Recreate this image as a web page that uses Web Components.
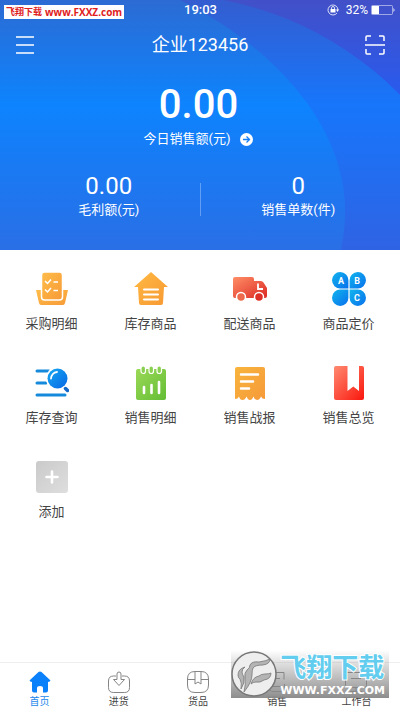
<!DOCTYPE html>
<html lang="zh-CN">
<head>
<meta charset="UTF-8">
<meta name="viewport" content="width=device-width, initial-scale=1.0">
<title>企业123456</title>
<style>
    body {
        margin: 0;
        background: #fff;
        color: #444;
        font-family: Roboto, "Noto Sans CJK SC", sans-serif;
        font-size: 13px;
        line-height: 20px;
    }
</style>
</head>
<body>
<app-shell>
    <status-bar slot="header" time="19:03" battery="32%"></status-bar>
    <title-bar slot="header">企业123456</title-bar>
    <sales-summary slot="header">
        <stat-figure size="large" value="0.00" href="#today">今日销售额(元)</stat-figure>
        <stat-figure slot="detail" value="0.00">毛利额(元)</stat-figure>
        <stat-figure slot="detail" value="0">销售单数(件)</stat-figure>
    </sales-summary>

    <menu-grid>
        <menu-tile icon="purchase">采购明细</menu-tile>
        <menu-tile icon="stock">库存商品</menu-tile>
        <menu-tile icon="truck">配送商品</menu-tile>
        <menu-tile icon="pricing">商品定价</menu-tile>
        <menu-tile icon="search">库存查询</menu-tile>
        <menu-tile icon="chart">销售明细</menu-tile>
        <menu-tile icon="report">销售战报</menu-tile>
        <menu-tile icon="book">销售总览</menu-tile>
        <menu-tile icon="add">添加</menu-tile>
    </menu-grid>

    <tab-bar slot="footer">
        <tab-item icon="home" href="#home" active>首页</tab-item>
        <tab-item icon="inbox" href="#inbox">进货</tab-item>
        <tab-item icon="goods" href="#goods">货品</tab-item>
        <tab-item icon="sales" href="#sales">销售</tab-item>
        <tab-item icon="desk" href="#desk">工作台</tab-item>
    </tab-bar>

    <site-label slot="overlay">飞翔下载</site-label>
    <site-stamp slot="overlay">飞翔下载</site-stamp>
</app-shell>

<script>
    const gradient = (id, from, to) => `
        <linearGradient id="${id}" x1="0" y1="0" x2="1" y2="1">
            <stop offset="0" stop-color="${from}"/><stop offset="1" stop-color="${to}"/>
        </linearGradient>`

    // viewBox 34 for menu icons, 22 for tab icons
    const ICONS = {
        purchase: [34, `<defs>${gradient("g", "#ffbd4a", "#f79a36")}</defs>
            <path d="M1 18h32l-3 13q-.5 2-2 2H6q-1.500 0-2-2z" fill="url(#g)"/>
            <rect x="6.500" y="0" width="21" height="28" rx="3" fill="url(#g)" stroke="#fff" stroke-width="1.500"/>
            <path d="M10 9l2.500 2.500L16 7.500M10 17.500l2.500 2.500L16 16M18.500 10H23M18.500 18.500H23" fill="none" stroke="#fff" stroke-width="1.500"/>`],
        stock: [34, `<defs>${gradient("g", "#ffba43", "#f79832")}</defs>
            <path d="M17 0l17 15h-4l-1 16q0 2-2 2H7q-2 0-2-2L4 15H0z" fill="url(#g)"/>
            <path d="M10 17.500h14M10 22.500h14M10 27.500h14" stroke="#fff" stroke-width="2" stroke-linecap="round"/>`],
        truck: [34, `<defs>${gradient("g", "#ff8e66", "#dc2b25")}</defs>
            <path d="M2 5h17q2 0 2 2v2h7q1.500 0 2.500 1.500L34 16v8q0 2-2 2H2q-2 0-2-2V7q0-2 2-2z" fill="url(#g)"/>
            <path d="M25 11.500V17h5" fill="none" stroke="#fff" stroke-width="1.800"/>
            <g fill="#ee6a4c" stroke="#fff" stroke-width="1.500"><circle cx="8" cy="25" r="4.500"/><circle cx="26" cy="25" r="4.500" fill="#dd3029"/></g>`],
        pricing: [34, `<defs>${gradient("g", "#12b5ee", "#0870ec")}</defs>
            <g fill="url(#g)"><path d="M16.400 16.400H8.500a8.200 8.200 0 1 1 7.900-8z"/><path d="M17.600 16.400v-8a8.200 8.200 0 1 1 7.900 8z"/>
            <path d="M16.400 17.600v8a8.200 8.200 0 1 1-7.900-8z"/><path d="M17.600 17.600h7.900a8.200 8.200 0 1 1-7.900 8z"/></g>
            <g fill="#fff" font-family="Roboto, sans-serif" font-size="9" font-weight="700" text-anchor="middle">
            <text x="9" y="12">A</text><text x="25" y="12">B</text><text x="25" y="29">C</text></g>`],
        search: [34, `<defs>${gradient("g", "#16a8f1", "#0868e5")}</defs>
            <path d="M2 5h12M2 17h9M2 29h28" stroke="#1589dc" stroke-width="3" stroke-linecap="round"/>
            <circle cx="22.500" cy="12.500" r="11.500" fill="#fff"/><circle cx="22.500" cy="12.500" r="10" fill="url(#g)"/>
            <path d="M16 12.500a7 7 0 0 1 6-6.500" fill="none" stroke="#fff" stroke-width="1.800" stroke-linecap="round"/>
            <path d="M30.500 22.500l2 2" stroke="#1368c8" stroke-width="3.500" stroke-linecap="round"/>`],
        chart: [34, `<defs>${gradient("g", "#9bd957", "#64bd35")}</defs>
            <path d="M4 3h26q2 0 2 2v27q0 2-2 2H4q-2 0-2-2V5q0-2 2-2z" fill="url(#g)"/>
            <g fill="#8ad050" stroke="#fff" stroke-width="1.200"><rect x="7" y="0" width="4.500" height="7.500" rx="2.200"/><rect x="15" y="0" width="4.500" height="7.500" rx="2.200"/><rect x="23" y="0" width="4.500" height="7.500" rx="2.200"/></g>
            <path d="M10 21v6M17.500 19v8M25 16v11" stroke="#fff" stroke-width="2.600" stroke-linecap="round"/>`],
        report: [34, `<defs>${gradient("g", "#f8b43c", "#f69a3a")}</defs>
            <path d="M4 1h26q2 0 2 2v30q-3 0-4-2.500-1.500 3.500-4 3.500t-3.500-3.500Q19 34 17 34t-3.500-3.500Q12 34 9.500 34T6 30.500Q5 33 2 33V3q0-2 2-2z" fill="url(#g)"/>
            <path d="M8 8.500h17M8 15.500h12M8 22.500h8" stroke="#fff" stroke-width="2.500" stroke-linecap="round"/>`],
        book: [34, `<defs>${gradient("g", "#ff8a70", "#fa160d")}</defs>
            <rect x="2" y="0" width="30" height="34" rx="2" fill="url(#g)"/>
            <path d="M15.500 0H27v25l-5.700-4.500-5.800 4.500z" fill="#fff"/>`],
        add: [34, `<defs>${gradient("g", "#cacaca", "#dedede")}</defs>
            <rect x="1" y="1" width="32" height="32" rx="3" fill="url(#g)"/>
            <path d="M17 11.500v11M11.500 17h11" stroke="#fff" stroke-width="2.600" stroke-linecap="round"/>`],
        home: [22, `<path d="M11 .5q.8 0 1.500.6l8.500 8q1 1-.3 1.400L19 11v8.500q0 2-2 2h-3V17q0-2-3-2t-3 2v4.500H5q-2 0-2-2V11l-1.700-.5Q0 10.100 1 9.100l8.500-8Q10.200.5 11 .5z" fill="#0b80fb"/>`],
        inbox: [22, `<g fill="none" stroke="#858585" stroke-linejoin="round">
            <path d="M8 5H5.500q-5 0-5 5v6.500q0 5 5 5h11q5 0 5-5V10q0-5-5-5H14"/>
            <path d="M9 8.500V3q0-2 2-2t2 2v5.500h3.500L11 14.500l-5.500-6z"/></g>`],
        goods: [22, `<g fill="none" stroke="#858585">
            <path d="M8 .5h6q7.500 0 7.500 7.500v6q0 7.500-7.500 7.500H8Q.5 21.500.5 14V8Q.5.500 8 .5z"/>
            <path d="M1 8.500h7M14 8.500h7M8 1v12l3-2 3 2V1"/></g>`],
        sales: [22, `<g fill="none" stroke="#858585">
            <path d="M3 1.500h15v7M18.500 13v7.500h-13l-4-4v-13"/><path d="M6 15.500h9M6 7.500h8"/></g>`],
        desk: [22, `<g fill="none" stroke="#858585">
            <rect x=".5" y="1.500" width="21" height="15" rx="2"/><path d="M5 20.500h12M11 17v3M6 7.500h10"/></g>`],
        menu: [20, `<path d="M1 2h18M1 10h18M1 18h18" stroke="#fff" stroke-width="1.500"/>`],
        scan: [20, `<path d="M1 6V2q0-1 1-1h4M14 1h4q1 0 1 1v4M19 14v4q0 1-1 1h-4M6 19H2q-1 0-1-1v-4M0 10h20" fill="none" stroke="#fff" stroke-width="1.500"/>`],
        arrow: [13, `<circle cx="6.500" cy="6.500" r="6.500" fill="#fff"/><path d="M3 6.500h6M6.500 3.500l3 3-3 3" fill="none" stroke="#167ff5" stroke-width="1.300"/>`],
        lock: [12, `<g fill="none" stroke="#fff" stroke-opacity=".8"><path d="M10 9a5 5 0 1 1 1-3"/><path d="M4.500 5.500V4a1.500 1.500 0 0 1 3 0v1.500"/></g>
            <rect x="3.500" y="5" width="5" height="3.500" fill="#fff"/><path d="M9 5.500h3L10.500 8z" fill="#fff"/>`],
    }

    class AppIcon extends HTMLElement {
        connectedCallback() {
            const [size, art] = ICONS[this.getAttribute("name")]
            this.attachShadow({ mode: "open" })
            this.shadowRoot.innerHTML = `
      <style>
        :host { display: block; flex: none; }
        svg { display: block; }
      </style>
      <svg width="${size}" height="${size}" viewBox="0 0 ${size} ${size}" aria-hidden="true">${art}</svg>
    `
        }
    }

    class AppShell extends HTMLElement {
        connectedCallback() {
            this.attachShadow({ mode: "open" })
            this.shadowRoot.innerHTML = `
      <style>
        :host {
          display: flex;
          flex-direction: column;
          min-height: 100vh;
          position: relative;
        }
        header {
          position: relative;
          overflow: hidden;
          color: #fff;
          padding-bottom: 30px;
          background: linear-gradient(#4250c8, #2a5aec 36%, #3161e6);
        }
        .rings {
          position: absolute;
          inset: 0;
          width: 100%;
          height: 100%;
        }
        .content { position: relative; }
        main { flex: 1; }
      </style>
      <header>
        <svg class="rings" viewBox="0 0 400 250" preserveAspectRatio="xMaxYMid slice" aria-hidden="true">
          <defs>
            <linearGradient id="outer" gradientUnits="userSpaceOnUse" x1="0" y1="0" x2="0" y2="250">
              <stop offset="0" stop-color="#345dd0"/><stop offset=".42" stop-color="#1776fb"/><stop offset="1" stop-color="#2f63e4"/>
            </linearGradient>
            <linearGradient id="inner" gradientUnits="userSpaceOnUse" x1="0" y1="0" x2="0" y2="250">
              <stop offset="0" stop-color="#2c6bd3"/><stop offset=".42" stop-color="#0d84fe"/><stop offset=".6" stop-color="#167cf6"/><stop offset="1" stop-color="#2a6fe6"/>
            </linearGradient>
          </defs>
          <circle cx="160" cy="330" r="336" fill="url(#outer)"/>
          <path d="M-600 0H180C280 50 345 130 345 210Q345 232 341 250H-600z" fill="url(#inner)"/>
        </svg>
        <div class="content"><slot name="header"></slot></div>
      </header>
      <main><slot></slot></main>
      <slot name="footer"></slot>
      <slot name="overlay"></slot>
    `
        }
    }

    class StatusBar extends HTMLElement {
        connectedCallback() {
            this.attachShadow({ mode: "open" })
            this.shadowRoot.innerHTML = `
      <style>
        :host {
          display: grid;
          grid-template-columns: 1fr auto 1fr;
          align-items: center;
          padding: 0 5px 0 6px;
          font-size: 12px;
        }
        time { grid-column: 2; font-size: 13px; font-weight: 500; }
        .power {
          display: flex;
          justify-content: flex-end;
          align-items: center;
          gap: 3px;
        }
        app-icon { margin-right: 4px; }
      </style>
      <time>${this.getAttribute("time")}</time>
      <div class="power">
        <app-icon name="lock"></app-icon>
        <span>${this.getAttribute("battery")}</span>
        <svg width="24" height="10" viewBox="0 0 24 10" aria-hidden="true">
          <rect x=".5" y=".5" width="21" height="9" rx="1" fill="none" stroke="#fff" stroke-opacity=".5"/>
          <rect x="1" y="1" width="7" height="8" fill="#fff"/>
          <path d="M22.500 3q2 2 0 4z" fill="#fff"/>
        </svg>
      </div>
    `
        }
    }

    class TitleBar extends HTMLElement {
        connectedCallback() {
            this.attachShadow({ mode: "open" })
            this.shadowRoot.innerHTML = `
      <style>
        :host {
          display: flex;
          align-items: center;
          justify-content: space-between;
          height: 50px;
          padding: 0 15px;
        }
        h1 {
          margin: 0;
          font-size: 18px;
          font-weight: 400;
        }
        button {
          border: 0;
          padding: 0;
          background: none;
          cursor: pointer;
        }
      </style>
      <button type="button" aria-label="菜单"><app-icon name="menu"></app-icon></button>
      <h1><slot></slot></h1>
      <button type="button" aria-label="扫一扫"><app-icon name="scan"></app-icon></button>
    `
        }
    }

    class SalesSummary extends HTMLElement {
        connectedCallback() {
            this.attachShadow({ mode: "open" })
            this.shadowRoot.innerHTML = `
      <style>
        :host { display: block; padding-top: 13px; }
        .total { padding-right: 3px; }
        .detail {
          position: relative;
          display: grid;
          grid-template-columns: 1fr 1fr;
          margin-top: 24px;
          padding: 0 7px 0 14px;
        }
        .detail::before {
          content: "";
          position: absolute;
          left: 50%;
          top: 10px;
          bottom: 4px;
          width: 1px;
          background: rgba(255, 255, 255, 0.3);
        }
      </style>
      <div class="total"><slot></slot></div>
      <div class="detail"><slot name="detail"></slot></div>
    `
        }
    }

    class StatFigure extends HTMLElement {
        connectedCallback() {
            const href = this.getAttribute("href")
            this.attachShadow({ mode: "open" })
            this.shadowRoot.innerHTML = `
      <style>
        :host {
          display: flex;
          flex-direction: column;
          align-items: center;
        }
        strong {
          font-size: 24px;
          line-height: 27px;
          font-weight: 400;
        }
        :host([size="large"]) strong {
          font-size: 40px;
          line-height: 44px;
          font-weight: 500;
          margin-bottom: 2px;
        }
        a {
          display: flex;
          align-items: center;
          gap: 10px;
          color: inherit;
          text-decoration: none;
        }
      </style>
      <strong>${this.getAttribute("value")}</strong>
      ${href ? `<a href="${href}"><slot></slot><app-icon name="arrow"></app-icon></a>` : "<span><slot></slot></span>"}
    `
        }
    }

    class MenuGrid extends HTMLElement {
        connectedCallback() {
            this.attachShadow({ mode: "open" })
            this.shadowRoot.innerHTML = `
      <style>
        :host {
          display: grid;
          grid-template-columns: repeat(4, 1fr);
          row-gap: 32px;
          padding: 22px 2px 22px 2px;
        }
      </style>
      <slot></slot>
    `
        }
    }

    class MenuTile extends HTMLElement {
        connectedCallback() {
            this.attachShadow({ mode: "open" })
            this.shadowRoot.innerHTML = `
      <style>
        :host { display: block; }
        button {
          display: flex;
          flex-direction: column;
          align-items: center;
          gap: 8px;
          width: 100%;
          border: 0;
          padding: 0;
          background: none;
          color: inherit;
          font: inherit;
          cursor: pointer;
        }
      </style>
      <button type="button">
        <app-icon name="${this.getAttribute("icon")}"></app-icon>
        <span><slot></slot></span>
      </button>
    `
        }
    }

    class TabBar extends HTMLElement {
        connectedCallback() {
            this.attachShadow({ mode: "open" })
            this.shadowRoot.innerHTML = `
      <style>
        nav {
          display: grid;
          grid-template-columns: repeat(5, 1fr);
          padding: 8px 4px 1px 0;
          border-top: 1px solid #eee;
        }
      </style>
      <nav><slot></slot></nav>
    `
        }
    }

    class TabItem extends HTMLElement {
        connectedCallback() {
            this.attachShadow({ mode: "open" })
            this.shadowRoot.innerHTML = `
      <style>
        :host {
          display: block;
          font-size: 10px;
          line-height: 14px;
        }
        :host([active]) { color: #2388ec; }
        a {
          display: flex;
          flex-direction: column;
          align-items: center;
          gap: 2px;
          color: inherit;
          text-decoration: none;
        }
      </style>
      <a href="${this.getAttribute("href")}">
        <app-icon name="${this.getAttribute("icon")}"></app-icon>
        <span><slot></slot></span>
      </a>
    `
        }
    }

    class SiteLabel extends HTMLElement {
        connectedCallback() {
            this.attachShadow({ mode: "open" })
            this.shadowRoot.innerHTML = `
      <style>
        :host {
          position: absolute;
          left: 4px;
          top: 5px;
          display: flex;
          gap: 3px;
          padding: 0 2px;
          background: #fff;
          color: #e0201c;
          font-size: 9px;
          font-weight: 700;
          line-height: 14px;
        }
        .url { font-family: "Open Sans", sans-serif; font-size: 10px; }
      </style>
      <slot></slot><span class="url">www.FXXZ.com</span>
    `
        }
    }

    class SiteStamp extends HTMLElement {
        connectedCallback() {
            this.attachShadow({ mode: "open" })
            this.shadowRoot.innerHTML = `
      <style>
        :host {
          position: absolute;
          right: 11px;
          bottom: 12px;
          display: flex;
          align-items: flex-end;
          gap: 3px;
          padding-right: 4px;
          color: #fff;
          background: linear-gradient(rgba(190, 190, 190, 0), rgba(135, 135, 135, 0.95));
          pointer-events: none;
        }
        svg { display: block; }
        .name {
          color: #62cdee;
          font-size: 26px;
          font-weight: 700;
          line-height: 32px;
          -webkit-text-stroke: 2px #fff;
          paint-order: stroke fill;
        }
        .url {
          font-family: "DejaVu Sans", sans-serif;
          font-size: 11px;
          font-weight: 700;
          line-height: 14px;
        }
        .text { display: flex; flex-direction: column; }
      </style>
      <svg width="46" height="48" viewBox="0 0 46 48" aria-hidden="true">
        <circle cx="23" cy="24" r="22" fill="#eee" stroke="#777" stroke-width="1.500"/>
        <g fill="#b4b4b4" stroke="#777" stroke-width=".8">
          <path d="M39 9q0 5-7 6-8 0-10 3-1 2-1 7 0 7-8 17 2-8 1-14-1-5 2-8 3-2 3-5 2-4 9-3 7-1 11-3z"/>
          <path d="M14 17q-7 2-7 8 0 3 2 4 2 4 1 10 4-6 3-12-2-3-2-5 0-3 3-5z"/>
          <path d="M40 23q0 6-7 7-4 3-8 2-3 0-5 2 2-7 8-8 2-2 6-2 4 0 6-1z"/>
        </g>
      </svg>
      <div class="text">
        <span class="name"><slot></slot></span>
        <span class="url">WWW.FXXZ.COM</span>
      </div>
    `
        }
    }

    customElements.define("app-icon", AppIcon)
    customElements.define("app-shell", AppShell)
    customElements.define("status-bar", StatusBar)
    customElements.define("title-bar", TitleBar)
    customElements.define("sales-summary", SalesSummary)
    customElements.define("stat-figure", StatFigure)
    customElements.define("menu-grid", MenuGrid)
    customElements.define("menu-tile", MenuTile)
    customElements.define("tab-bar", TabBar)
    customElements.define("tab-item", TabItem)
    customElements.define("site-label", SiteLabel)
    customElements.define("site-stamp", SiteStamp)
</script>
</body>
</html>
